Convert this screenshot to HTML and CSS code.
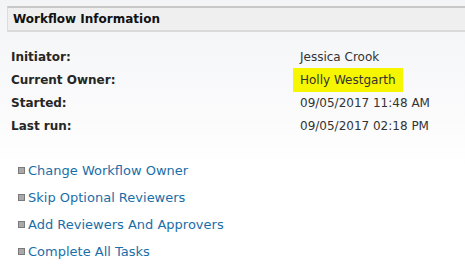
FILE: index.html
```html
<!DOCTYPE html>
<html>
<head>
  <meta charset="utf-8">
  <link rel="stylesheet" href="styles.css">
</head>
<body>
  <div class="panel">
    <div class="panel_header">Workflow Information</div>
    <table class="info">
      <tr><td class="label">Initiator:</td><td class="value">Jessica Crook</td></tr>
      <tr><td class="label">Current Owner:</td><td class="value"><span class="marked">Holly Westgarth</span></td></tr>
      <tr><td class="label">Started:</td><td class="value">09/05/2017 11:48 AM</td></tr>
      <tr><td class="label">Last run:</td><td class="value">09/05/2017 02:18 PM</td></tr>
    </table>
    <ul class="actions">
      <li><a href="#">Change Workflow Owner</a></li>
      <li><a href="#">Skip Optional Reviewers</a></li>
      <li><a href="#">Add Reviewers And Approvers</a></li>
      <li><a href="#">Complete All Tasks</a></li>
    </ul>
  </div>
</body>
</html>
```

FILE: styles.css
```css
html, body {
  margin: 0;
  height: 100%;
}
body {
  background: linear-gradient(#f3f4f6 0px, #fbfbfc 120px, #ffffff 165px);
  font-family: "DejaVu Sans", Verdana, sans-serif;
  font-size: 12px;
  color: #333;
  overflow: hidden;
}
.panel {
  padding: 6px 0 0 7px;
}
.panel_header {
  background-color: #efefef;
  border-top: 2px solid #c8c8c8;
  border-bottom: 2px solid #dadada;
  border-left: 1px solid #dcdcdc;
  height: 22px;
  line-height: 22px;
  padding-left: 5px;
  font-weight: bold;
  color: #111;
}
.info {
  border-collapse: collapse;
  margin: 13px 0 0 4px;
}
.info td {
  height: 23px;
  padding: 0;
  vertical-align: middle;
}
.label {
  width: 289px;
  font-weight: bold;
  color: #262626;
}
.value {
  color: #333;
}
.marked {
  background-color: #f6f600;
  display: inline-block;
  padding: 5px 7px;
  margin: -2px 0 -2px -7px;
}
.actions {
  list-style: none;
  margin: 20px 0 0 0;
  padding: 0 0 0 11px;
}
.actions li {
  height: 27px;
  line-height: 27px;
  display: flex;
  align-items: center;
}
.actions li::before {
  content: "";
  width: 5px;
  height: 5px;
  background-color: #a9a9a9;
  border: 1px solid #7a7a7a;
  margin-right: 3px;
}
.actions a {
  color: #1a6ea8;
  text-decoration: none;
  font-size: 13px;
}
```
